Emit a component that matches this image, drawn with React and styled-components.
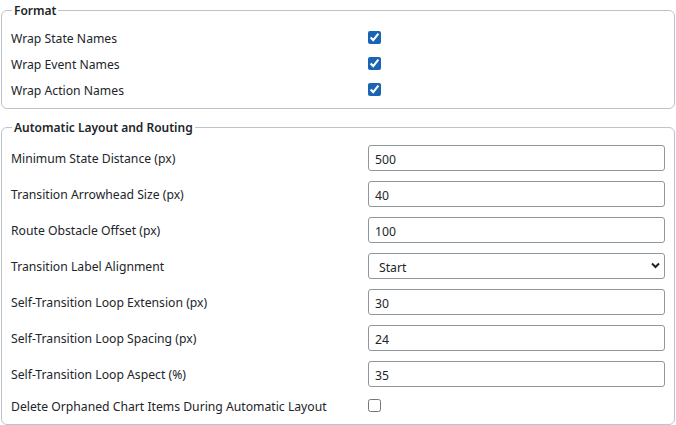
import React from "react";
import styled, { createGlobalStyle } from "styled-components";

const Global = createGlobalStyle`
  html, body { margin: 0; padding: 0; background: #fff; }
  body { font-family: "Noto Sans", "Open Sans", sans-serif; font-size: 12px; color: #212529; }
  * { box-sizing: border-box; }
`;

const Page = styled.div`
  width: 676px;
  padding: 2px 1px 0 1px;
  display: flex;
  flex-direction: column;
  gap: 10px;
`;

const Fieldset = styled.fieldset`
  margin: 0;
  border: 1px solid #bcc3ca;
  border-radius: 6px;
  padding: ${(p) => p.$pad};
  min-width: 0;
`;

const Legend = styled.legend`
  font-weight: 600;
  font-size: 12px;
  padding: 0 2px;
  margin-left: 1px;
  line-height: 17px;
`;

const Grid = styled.div`
  display: grid;
  grid-template-columns: 357px 1fr;
  row-gap: ${(p) => p.$gap}px;
  align-items: center;
`;

const Label = styled.label`
  font-size: 12.2px;
  height: ${(p) => p.$h}px;
  padding-top: 2px;
  line-height: ${(p) => p.$h - 2}px;
  white-space: nowrap;
`;

const Check = styled.input.attrs({ type: "checkbox" })`
  margin: 0 0 2px 0;
  width: 13px;
  height: 13px;
  accent-color: #1b63b3;
  justify-self: start;
`;

const Input = styled.input`
  height: 26px;
  width: 100%;
  border: 1px solid #8f969e;
  border-radius: 3px;
  padding: 2px 6px 0 6px;
  font: inherit;
  font-size: 12.2px;
  color: #212529;
  background: #fff;
  outline: none;
`;

const SelectWrap = styled.div`
  position: relative;
  width: 100%;
`;

const Select = styled.select`
  appearance: none;
  -webkit-appearance: none;
  height: 26px;
  width: 100%;
  border: 1px solid #8f969e;
  border-radius: 3px;
  padding: 2px 10px 0 10px;
  font: inherit;
  font-size: 12.2px;
  color: #212529;
  background: #fff;
  outline: none;
`;

const Chevron = styled.svg`
  position: absolute;
  right: 5px;
  top: 9px;
  pointer-events: none;
`;

function Row({ label, children, h }) {
  return (
    <>
      <Label $h={h}>{label}</Label>
      {children}
    </>
  );
}

export default function App() {
  const inputs = [
    ["Minimum State Distance (px)", "500"],
    ["Transition Arrowhead Size (px)", "40"],
    ["Route Obstacle Offset (px)", "100"],
  ];
  const inputs2 = [
    ["Self-Transition Loop Extension (px)", "30"],
    ["Self-Transition Loop Spacing (px)", "24"],
    ["Self-Transition Loop Aspect (%)", "35"],
  ];
  return (
    <>
      <Global />
      <Page>
        <Fieldset $pad="6px 9px 5px 9px">
          <Legend>Format</Legend>
          <Grid $gap={0}>
            <Row label="Wrap State Names" h={26}><Check defaultChecked /></Row>
            <Row label="Wrap Event Names" h={26}><Check defaultChecked /></Row>
            <Row label="Wrap Action Names" h={26}><Check defaultChecked /></Row>
          </Grid>
        </Fieldset>
        <Fieldset $pad="9px 9px 9px 9px">
          <Legend>Automatic Layout and Routing</Legend>
          <Grid $gap={10}>
            {inputs.map(([l, v]) => (
              <Row key={l} label={l} h={26}><Input defaultValue={v} /></Row>
            ))}
            <Row label="Transition Label Alignment" h={26}>
              <SelectWrap>
                <Select defaultValue="Start">
                  <option>Start</option>
                  <option>Center</option>
                  <option>End</option>
                </Select>
                <Chevron width="9" height="7" viewBox="0 0 9 7">
                  <path d="M1 1.5 L4.5 5 L8 1.5" fill="none" stroke="#1f2328" strokeWidth="2" />
                </Chevron>
              </SelectWrap>
            </Row>
            {inputs2.map(([l, v]) => (
              <Row key={l} label={l} h={26}><Input defaultValue={v} /></Row>
            ))}
            <Row label="Delete Orphaned Chart Items During Automatic Layout" h={18}><Check /></Row>
          </Grid>
        </Fieldset>
      </Page>
    </>
  );
}
